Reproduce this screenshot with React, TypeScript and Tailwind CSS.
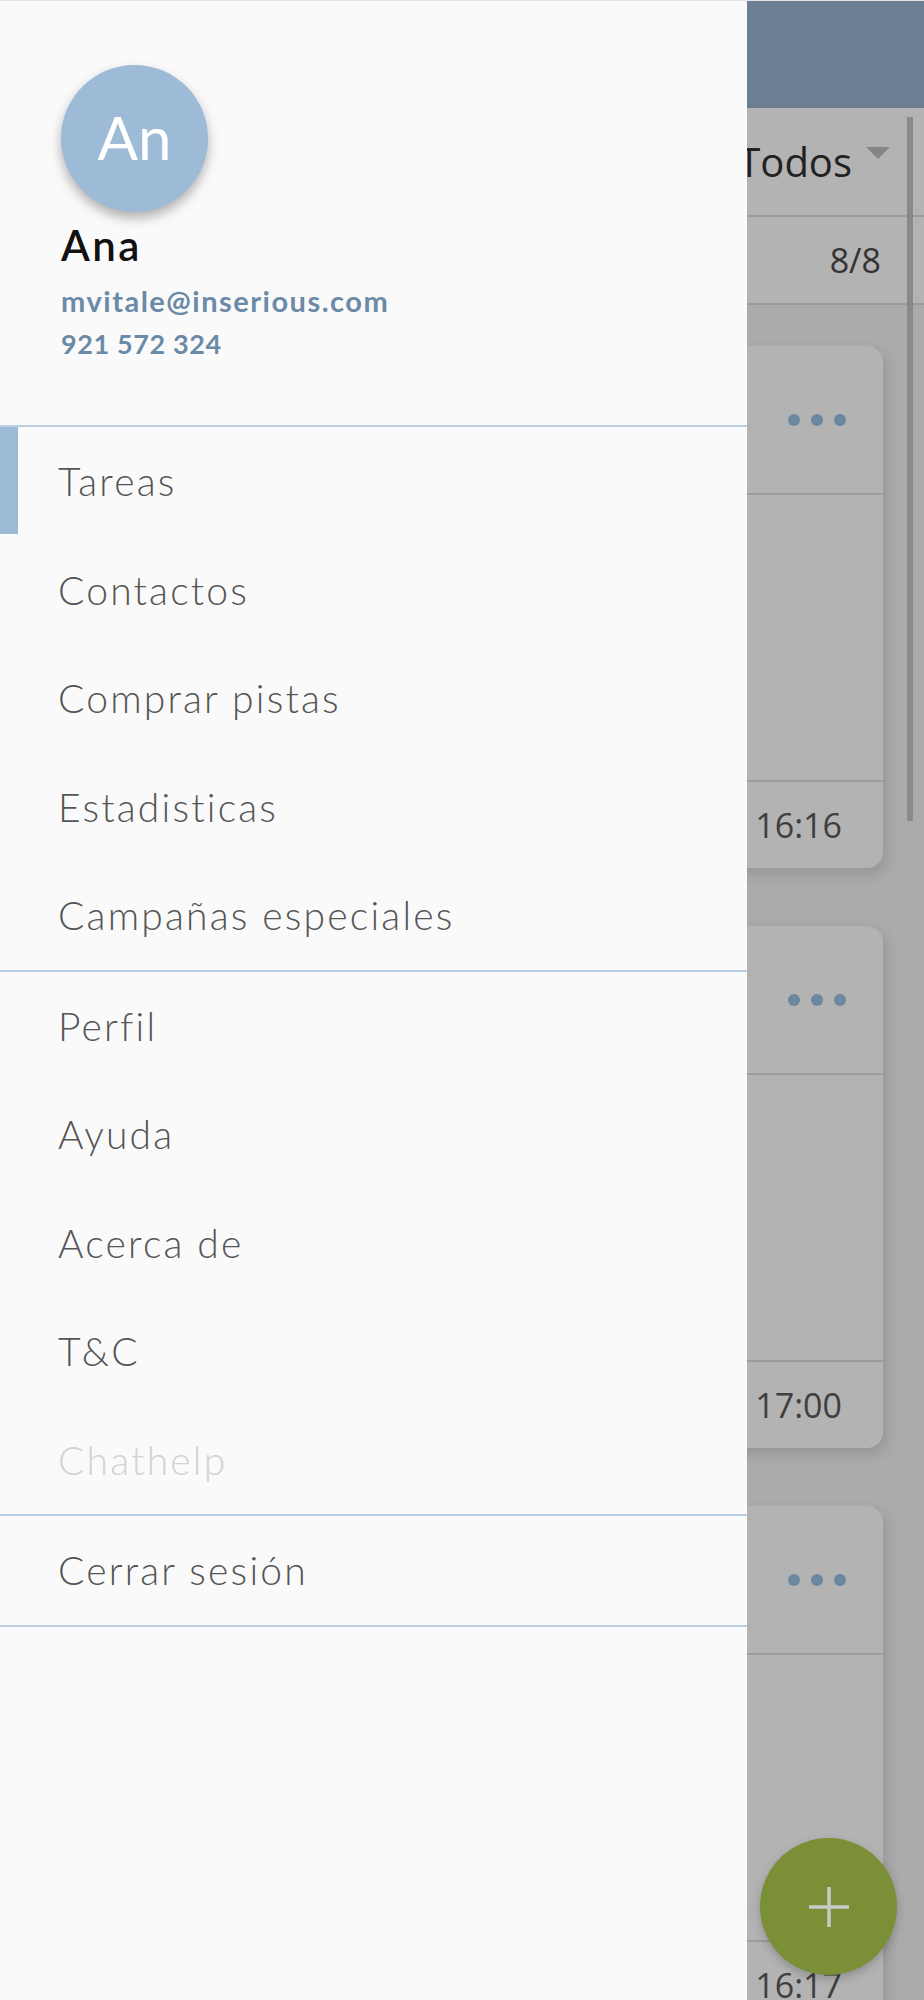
import React from 'react';

const mainItems = ['Tareas', 'Contactos', 'Comprar pistas', 'Estadisticas', 'Campañas especiales'];
const moreItems = ['Perfil', 'Ayuda', 'Acerca de', 'T&C', 'Chathelp'];

const TaskCard: React.FC<{ time: string }> = ({ time }) => (
  <div className="h-[522px] shrink-0 rounded-[16px] bg-[#b3b3b3] shadow-[4px_6px_14px_rgba(0,0,0,0.12)] flex flex-col">
    <div className="h-[149px] shrink-0 flex items-center justify-end gap-[11px] pr-[37px] border-b-2 border-[#9c9c9c]">
      <span className="w-3 h-3 rounded-full bg-[#6b87a1]" />
      <span className="w-3 h-3 rounded-full bg-[#6b87a1]" />
      <span className="w-3 h-3 rounded-full bg-[#6b87a1]" />
    </div>
    <div className="flex-1 border-b-2 border-[#9c9c9c]" />
    <div className="h-[86px] shrink-0 flex items-center justify-end pr-[41px] text-[34px] text-[#3f3f3f]">{time}</div>
  </div>
);

const MenuItem: React.FC<{ label: string; active?: boolean; disabled?: boolean }> = ({ label, active, disabled }) => (
  <div className="relative h-[108.5px] flex items-center pl-[58px]">
    {active && <span className="absolute left-0 top-0 h-[107px] w-[18px] bg-[#9dbad6]" />}
    <span
      className={`text-[39px] font-light tracking-[2.2px] ${disabled ? 'text-[#d2d2d2]' : 'text-[#555555]'}`}
    >
      {label}
    </span>
  </div>
);

export default function App() {
  return (
    <div className="relative w-[924px] h-[2000px] overflow-hidden bg-[#ababab] border-t border-[#e6e6e6] font-['Open_Sans',sans-serif]">
      {/* app behind the drawer, dimmed */}
      <div className="flex flex-col">
        <div className="h-[107px] shrink-0 bg-[#6b7e92]" />
        <div className="h-[109px] shrink-0 bg-[#b3b3b3] border-b-2 border-[#9a9a9a] flex items-center justify-end gap-[14px] pr-[34px]">
          <span className="text-[40px] text-[#222222]">Todos</span>
          <svg width="24" height="12" viewBox="0 0 24 12" className="-mt-[18px]">
            <path d="M0 0 L24 0 L12 12 Z" fill="#858585" />
          </svg>
        </div>
        <div className="h-[88px] shrink-0 bg-[#b3b3b3] border-b-2 border-[#9a9a9a] flex items-center justify-end pr-[43px]">
          <span className="text-[34px] text-[#333333]">8/8</span>
        </div>
        <div className="flex flex-col gap-[58px] pt-[41px] px-[41px]">
          <TaskCard time="16:16" />
          <TaskCard time="17:00" />
          <TaskCard time="16:17" />
        </div>
      </div>

      {/* scrollbar */}
      <div className="absolute right-[11px] top-[116px] w-[6px] h-[704px] bg-[#8a8a8a]" />

      {/* floating add button */}
      <div className="absolute left-[760px] top-[1837px] w-[137px] h-[137px] rounded-full bg-[#7b8f37] shadow-[0_4px_10px_rgba(0,0,0,0.2)] flex items-center justify-center">
        <svg width="40" height="40" viewBox="0 0 40 40">
          <path d="M20 0 V40 M0 20 H40" stroke="#c9c9c9" strokeWidth="3.5" />
        </svg>
      </div>

      {/* side drawer */}
      <div className="absolute left-0 top-0 w-[747px] h-full bg-[#fafafa] font-['Lato',sans-serif]">
        <div className="h-[424px] pt-[64px] pl-[61px] flex flex-col">
          <div className="w-[147px] h-[147px] shrink-0 rounded-full bg-[#9dbad6] shadow-[0_6px_12px_rgba(0,0,0,0.3)] flex items-center justify-center">
            <span className="text-[60px] text-white leading-none -mt-[4px]">An</span>
          </div>
          <div className="mt-[9px] text-[42px] leading-[48px] font-semibold text-[#111111] tracking-[2.5px]">Ana</div>
          <div className="mt-[14px] text-[29px] leading-[36px] font-bold text-[#6b8aa7] tracking-[1.5px]">mvitale@inserious.com</div>
          <div className="mt-[7px] text-[27px] leading-[36px] font-bold text-[#6b8aa7] tracking-[0.6px]">921 572 324</div>
        </div>
        <div className="border-t-2 border-[#b9cfe4]">
          {mainItems.map((item, i) => (
            <MenuItem key={item} label={item} active={i === 0} />
          ))}
        </div>
        <div className="border-t-2 border-[#b9cfe4]">
          {moreItems.map((item) => (
            <MenuItem key={item} label={item} disabled={item === 'Chathelp'} />
          ))}
        </div>
        <div className="border-y-2 border-[#b9cfe4]">
          <MenuItem label="Cerrar sesión" />
        </div>
      </div>
    </div>
  );
}
